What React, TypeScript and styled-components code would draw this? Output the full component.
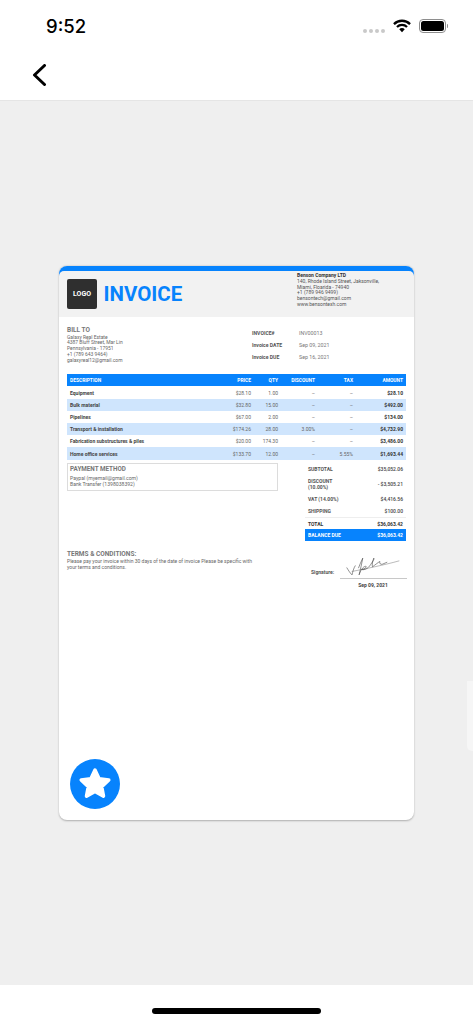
import React from "react";
import styled, { createGlobalStyle } from "styled-components";

const BLUE = "#0783fd";

const GlobalStyle = createGlobalStyle`
  html, body {
    margin: 0;
    padding: 0;
    background: #ffffff;
  }
  * {
    box-sizing: border-box;
  }
  body {
    font-family: Roboto, "Liberation Sans", sans-serif;
  }
`;

const items = [
  { name: "Equipment", price: "$28.10", qty: "1.00", discount: "–", tax: "–", amount: "$28.10" },
  { name: "Bulk material", price: "$32.80", qty: "15.00", discount: "–", tax: "–", amount: "$492.00" },
  { name: "Pipelines", price: "$67.00", qty: "2.00", discount: "–", tax: "–", amount: "$134.00" },
  { name: "Transport & installation", price: "$174.26", qty: "28.00", discount: "3.00%", tax: "–", amount: "$4,732.90" },
  { name: "Fabrication substructures & piles", price: "$20.00", qty: "174.30", discount: "–", tax: "–", amount: "$3,486.00" },
  { name: "Home office services", price: "$133.70", qty: "12.00", discount: "–", tax: "5.55%", amount: "$1,693.44" },
];

const totals = [
  { label: "SUBTOTAL", value: "$35,052.06" },
  { label: "DISCOUNT\n(10.00%)", value: "- $3,505.21", tall: true },
  { label: "VAT (14.00%)", value: "$4,416.56" },
  { label: "SHIPPING", value: "$100.00" },
];

export default function App() {
  return (
    <Screen>
      <GlobalStyle />
      <StatusBar>
        <Clock>9:52</Clock>
        <StatusIcons>
          <SignalDots>
            <i />
            <i />
            <i />
            <i />
          </SignalDots>
          <svg width="18" height="14" viewBox="0 0 19 14">
            <path d="M1 5 A12 12 0 0 1 18 5" fill="none" stroke="#000" strokeWidth="2.4" />
            <path d="M4.2 8 A7.6 7.6 0 0 1 14.8 8" fill="none" stroke="#000" strokeWidth="2.4" />
            <path d="M6.6 10.4 A4 4 0 0 1 12.4 10.4 L9.5 13.6 Z" fill="#000" />
          </svg>
          <Battery>
            <BatteryFill />
          </Battery>
        </StatusIcons>
      </StatusBar>
      <NavBar>
        <svg width="15" height="22" viewBox="0 0 15 22">
          <path d="M12.5 1.5 L2.5 11 L12.5 20.5" fill="none" stroke="#000" strokeWidth="3" strokeLinecap="round" strokeLinejoin="round" />
        </svg>
      </NavBar>
      <Viewer>
        <NextPagePeek />
        <Card>
          <TopStrip />
          <CardHeader>
            <LogoBox>LOGO</LogoBox>
            <InvoiceTitle>INVOICE</InvoiceTitle>
            <Company>
              <strong>Benson Company LTD</strong>
              <span>140, Rhode Island Street, Jaksonville,</span>
              <span>Miami, Floarida - 74940</span>
              <span>+1 (789 946 9499)</span>
              <span>bensontech@gmail.com</span>
              <span>www.bensontexh.com</span>
            </Company>
          </CardHeader>
          <CardBody>
            <BillRow>
              <BillTo>
                <SectionTitle>BILL TO</SectionTitle>
                <span>Galaxy Real Estate</span>
                <span>4387 Bluff Street, Mar Lin</span>
                <span>Pennsylvania - 17951</span>
                <span>+1 (789 643 9464)</span>
                <span>galaxyreal12@gmail.com</span>
              </BillTo>
              <Meta>
                <MetaLabel>INVOICE#</MetaLabel>
                <MetaValue>INV00013</MetaValue>
                <MetaLabel>Invoice DATE</MetaLabel>
                <MetaValue>Sep 09, 2021</MetaValue>
                <MetaLabel>Invoice DUE</MetaLabel>
                <MetaValue>Sep 16, 2021</MetaValue>
              </Meta>
            </BillRow>

            <TableHead>
              <span>DESCRIPTION</span>
              <span>PRICE</span>
              <span>QTY</span>
              <span>DISCOUNT</span>
              <span>TAX</span>
              <span>AMOUNT</span>
            </TableHead>
            {items.map((item, i) => (
              <TableRow key={item.name} $shaded={i % 2 === 1}>
                <ItemName>{item.name}</ItemName>
                <span>{item.price}</span>
                <span>{item.qty}</span>
                <span>{item.discount}</span>
                <span>{item.tax}</span>
                <ItemAmount>{item.amount}</ItemAmount>
              </TableRow>
            ))}

            <LowerSection>
              <LeftColumn>
                <PaymentBox>
                  <PaymentTitle>PAYMENT METHOD</PaymentTitle>
                  <span>Paypal (myemail@gmail.com)</span>
                  <span>Bank Transfer (1398038392)</span>
                </PaymentBox>
                <Terms>
                  <SectionTitle>TERMS &amp; CONDITIONS:</SectionTitle>
                  <span>Please pay your invoice within 30 days of the date of invoice Please be specific with</span>
                  <span>your terms and conditions.</span>
                </Terms>
              </LeftColumn>
              <RightColumn>
                {totals.map((t) => (
                  <TotalRow key={t.label} $tall={t.tall}>
                    <TotalLabel>{t.label}</TotalLabel>
                    <TotalValue>{t.value}</TotalValue>
                  </TotalRow>
                ))}
                <GrandTotal>
                  <span>TOTAL</span>
                  <span>$36,063.42</span>
                </GrandTotal>
                <BalanceDue>
                  <span>BALANCE DUE</span>
                  <span>$36,063.42</span>
                </BalanceDue>
                <SignatureRow>
                  <SignatureLabel>Signature:</SignatureLabel>
                  <SignatureBox>
                    <svg width="57" height="21" viewBox="150 290 170 62">
                      <path
                        d="M155 324 C160 332 166 342 171 346 C173 336 176 326 181 318 M190 326 C194 316 198 306 203 296 C200 312 196 330 192 346 C196 334 202 322 212 320 C216 322 208 330 200 330 C208 332 218 328 226 316 C232 306 238 300 236 296 C232 306 230 316 232 322 C240 316 250 308 254 306 C252 312 256 316 262 314 L276 308"
                        fill="none"
                        stroke="#333"
                        strokeWidth="1.6"
                      />
                      <path d="M170 336 C210 328 270 316 312 304" fill="none" stroke="#555" strokeWidth="1.2" />
                    </svg>
                  </SignatureBox>
                </SignatureRow>
                <SignatureDate>Sep 09, 2021</SignatureDate>
              </RightColumn>
            </LowerSection>
          </CardBody>
          <StarButton>
            <svg width="34" height="34" viewBox="0 0 34 34">
              <path
                d="M17 3 L21.1 11.8 L30.8 13 L23.7 19.7 L25.5 29.2 L17 24.5 L8.5 29.2 L10.3 19.7 L3.2 13 L12.9 11.8 Z"
                fill="#fff"
                stroke="#fff"
                strokeWidth="3.5"
                strokeLinejoin="round"
              />
            </svg>
          </StarButton>
        </Card>
      </Viewer>
      <HomeArea>
        <HomeIndicator />
      </HomeArea>
    </Screen>
  );
}

const Screen = styled.div`
  width: 473px;
  height: 1024px;
  display: flex;
  flex-direction: column;
  overflow: hidden;
  background: #fff;
`;

const StatusBar = styled.div`
  height: 50px;
  display: flex;
  align-items: flex-start;
  justify-content: space-between;
  padding: 15px 27px 0 46px;
`;

const Clock = styled.div`
  font-family: Inter, Roboto, sans-serif;
  font-size: 18.5px;
  line-height: 23px;
  font-weight: 500;
  color: #000;
`;

const StatusIcons = styled.div`
  display: flex;
  align-items: center;
  gap: 8px;
  padding-top: 4px;
`;

const SignalDots = styled.div`
  display: flex;
  gap: 2px;
  margin-top: 9px;

  i {
    display: block;
    width: 4px;
    height: 4px;
    border-radius: 50%;
    background: #c9c9c9;
  }
`;

const Battery = styled.div`
  position: relative;
  width: 27px;
  height: 14px;
  border: 1px solid #8e8e8e;
  border-radius: 4px;
  padding: 1px;

  &::after {
    content: "";
    position: absolute;
    right: -3px;
    top: 4px;
    width: 1.5px;
    height: 4px;
    background: #8e8e8e;
    border-radius: 0 1px 1px 0;
  }
`;

const BatteryFill = styled.div`
  width: 100%;
  height: 100%;
  background: #000;
  border-radius: 2.5px;
`;

const NavBar = styled.div`
  height: 51px;
  display: flex;
  align-items: center;
  padding: 0 0 0 32px;
  border-bottom: 1.5px solid #e5e5e5;
`;

const Viewer = styled.div`
  position: relative;
  flex: 1;
  background: #efefef;
  padding: 165px 0 0 59px;
`;

const NextPagePeek = styled.div`
  position: absolute;
  right: 0;
  top: 580px;
  width: 6px;
  height: 70px;
  background: #f6f6f6;
  border-radius: 0 0 0 5px;
`;

const Card = styled.div`
  position: relative;
  width: 355px;
  height: 554px;
  background: #fff;
  border-radius: 8px;
  overflow: hidden;
  box-shadow: 0 0.5px 2px rgba(0, 0, 0, 0.28);
`;

const TopStrip = styled.div`
  height: 10px;
  background: ${BLUE};
`;

const CardHeader = styled.div`
  position: relative;
  height: 46px;
  margin-top: -5px;
  display: flex;
  align-items: center;
  padding-left: 8px;
  background: #f2f2f2;
  border-radius: 5px 5px 0 0;
`;

const LogoBox = styled.div`
  width: 30px;
  height: 29.5px;
  display: flex;
  align-items: center;
  justify-content: center;
  background: #2f2f2f;
  border-radius: 2px;
  color: #fff;
  font-size: 7px;
  font-weight: 700;
`;

const InvoiceTitle = styled.div`
  margin-left: 6.5px;
  color: ${BLUE};
  font-size: 20.5px;
  line-height: 28px;
  font-weight: 700;
`;

const Company = styled.div`
  margin-left: auto;
  align-self: flex-start;
  width: 117px;
  padding-top: 2px;
  display: flex;
  flex-direction: column;
  font-size: 5px;
  line-height: 5.8px;
  color: #555;

  strong {
    color: #333;
    font-weight: 700;
  }
`;

const CardBody = styled.div`
  padding: 0 8px;
`;

const BillRow = styled.div`
  display: flex;
  padding-top: 10px;
`;

const BillTo = styled.div`
  width: 185px;
  display: flex;
  flex-direction: column;
  font-size: 4.95px;
  line-height: 5.8px;
  color: #666;
`;

const SectionTitle = styled.div`
  font-size: 6.5px;
  line-height: 7.5px;
  font-weight: 700;
  color: #777;
`;

const Meta = styled.div`
  display: grid;
  grid-template-columns: 47px auto;
  grid-auto-rows: 12px;
  align-items: center;
  font-size: 5.1px;
`;

const MetaLabel = styled.div`
  font-weight: 700;
  color: #555;
`;

const MetaValue = styled.div`
  font-size: 5.3px;
  color: #777;
`;

const tableColumns = "1fr 27px 27px 37px 38px 50px";

const TableHead = styled.div`
  margin-top: 11px;
  height: 12px;
  display: grid;
  grid-template-columns: ${tableColumns};
  align-items: center;
  padding: 0 3px;
  background: ${BLUE};
  color: #fff;
  font-size: 4.9px;
  font-weight: 700;
  text-align: right;

  span:first-child {
    text-align: left;
  }
`;

const TableRow = styled.div<{ $shaded: boolean }>`
  height: 12.2px;
  display: grid;
  grid-template-columns: ${tableColumns};
  align-items: center;
  padding: 0 3px;
  background: ${(p) => (p.$shaded ? "#cfe5fd" : "#fff")};
  color: #666;
  font-size: 5px;
  text-align: right;
`;

const ItemName = styled.span`
  font-weight: 700;
  color: #444;
  text-align: left;
`;

const ItemAmount = styled.span`
  font-weight: 700;
  color: #333;
`;

const LowerSection = styled.div`
  margin-top: 3.3px;
  display: flex;
  justify-content: space-between;
`;

const LeftColumn = styled.div`
  width: 211px;
`;

const PaymentBox = styled.div`
  height: 28px;
  padding: 2.5px 2px 0;
  display: flex;
  flex-direction: column;
  border: 1px solid #dcdcdc;
  font-size: 5.1px;
  line-height: 6px;
  color: #666;
`;

const PaymentTitle = styled.div`
  margin-bottom: 2px;
  font-size: 6.3px;
  line-height: 7px;
  font-weight: 700;
  color: #777;
`;

const Terms = styled.div`
  margin-top: 60.5px;
  display: flex;
  flex-direction: column;
  font-size: 5px;
  line-height: 5.6px;
  color: #666;
`;

const RightColumn = styled.div`
  width: 101px;
  font-size: 5px;
  color: #555;
`;

const TotalRow = styled.div<{ $tall?: boolean }>`
  height: ${(p) => (p.$tall ? "18px" : "12px")};
  display: flex;
  align-items: center;
  justify-content: space-between;
  padding: 0 3px;
`;

const TotalLabel = styled.span`
  font-weight: 700;
  line-height: 6px;
  white-space: pre-line;
`;

const TotalValue = styled.span`
  font-weight: 500;
  color: #444;
`;

const GrandTotal = styled.div`
  height: 12.5px;
  display: flex;
  align-items: center;
  justify-content: space-between;
  padding: 0 3px;
  border-top: 1px solid #eeeeee;
  font-weight: 700;
  color: #333;
`;

const BalanceDue = styled.div`
  height: 12px;
  display: flex;
  align-items: center;
  justify-content: space-between;
  padding: 0 3px;
  background: ${BLUE};
  color: #fff;
  font-weight: 700;
`;

const SignatureRow = styled.div`
  margin-top: 15px;
  margin-right: -1px;
  display: flex;
  justify-content: flex-end;
  align-items: flex-end;
  gap: 4px;
`;

const SignatureLabel = styled.div`
  width: 25px;
  margin-bottom: 4px;
  line-height: 6px;
  font-weight: 700;
  color: #555;
`;

const SignatureBox = styled.div`
  width: 67px;
  height: 23px;
  padding-left: 5px;
  border-bottom: 1.3px solid #c8c8c8;

  svg {
    display: block;
  }
`;

const SignatureDate = styled.div`
  margin-top: 3px;
  padding-left: 35px;
  line-height: 6px;
  text-align: center;
  font-weight: 700;
  color: #444;
`;

const StarButton = styled.div`
  position: absolute;
  left: 11px;
  bottom: 11px;
  width: 50px;
  height: 50px;
  display: flex;
  align-items: center;
  justify-content: center;
  border-radius: 50%;
  background: ${BLUE};
`;

const HomeArea = styled.div`
  height: 39px;
  display: flex;
  justify-content: center;
  padding-top: 23px;
  background: #fff;
`;

const HomeIndicator = styled.div`
  width: 169px;
  height: 6px;
  border-radius: 3px;
  background: #000;
`;
